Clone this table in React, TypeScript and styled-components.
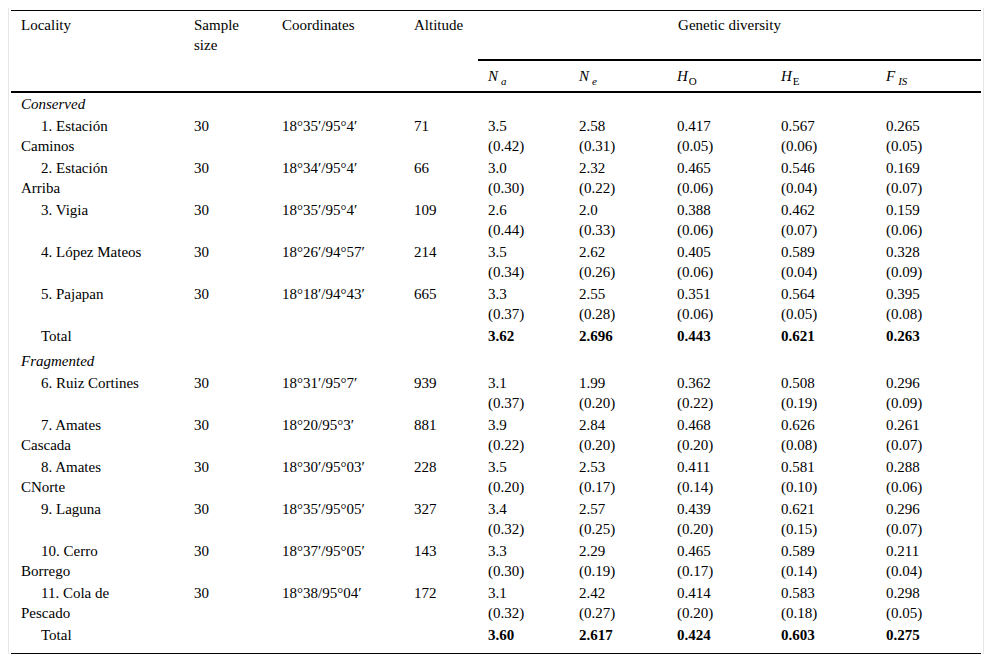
import React from "react";
import styled, { createGlobalStyle } from "styled-components";

const GlobalStyle = createGlobalStyle`
  body {
    margin: 8px;
    background: #ffffff;
    color: #000000;
    font-family: "Liberation Serif", "Times New Roman", serif;
  }
`;

const Frame = styled.div`
  border-left: 1px solid #e6e6e6;
  border-right: 1px solid #e6e6e6;
  padding: 2px 2px 0;
`;

const Table = styled.table`
  width: 100%;
  border-collapse: collapse;
  table-layout: fixed;
  font-family: "Liberation Serif", "Times New Roman", serif;
  font-size: 15px;
  line-height: 20px;
  color: #000;
  border-top: 1px solid #000;
  border-bottom: 1px solid #000;
`;

const HeadRow = styled.tr<{ $h: number }>`
  height: ${(p) => p.$h}px;
`;

const HeadCell = styled.th<{ $center?: boolean; $rule?: boolean; $tall?: boolean }>`
  text-align: ${(p) => (p.$center ? "center" : "left")};
  font-weight: normal;
  vertical-align: top;
  padding: ${(p) => (p.$tall ? "5px 10px" : "4px 10px")};
  border-bottom: ${(p) => (p.$rule ? "2px solid #000" : "none")};
`;

const Sym = styled.span`
  font-style: italic;
`;

const Sub = styled.sub<{ $italic?: boolean }>`
  font-size: 11px;
  line-height: 0;
  vertical-align: -4px;
  margin-left: ${(p) => (p.$italic ? "3px" : "1px")};
  font-style: ${(p) => (p.$italic ? "italic" : "normal")};
`;

const Cell = styled.td<{ $bold?: boolean; $bottom?: number }>`
  vertical-align: top;
  padding: 1px 10px ${(p) => p.$bottom ?? 1}px;
  font-weight: ${(p) => (p.$bold ? "bold" : "normal")};
`;

const Section = styled.span`
  font-style: italic;
`;

const Name = styled.div`
  text-indent: 20px;
`;

type Row = {
  name: string[];
  coord: string;
  alt: string;
  vals: [string, string][];
};

const conserved: Row[] = [
  { name: ["1. Estación", "Caminos"], coord: "18°35′/95°4′", alt: "71", vals: [["3.5", "(0.42)"], ["2.58", "(0.31)"], ["0.417", "(0.05)"], ["0.567", "(0.06)"], ["0.265", "(0.05)"]] },
  { name: ["2. Estación", "Arriba"], coord: "18°34′/95°4′", alt: "66", vals: [["3.0", "(0.30)"], ["2.32", "(0.22)"], ["0.465", "(0.06)"], ["0.546", "(0.04)"], ["0.169", "(0.07)"]] },
  { name: ["3. Vigia"], coord: "18°35′/95°4′", alt: "109", vals: [["2.6", "(0.44)"], ["2.0", "(0.33)"], ["0.388", "(0.06)"], ["0.462", "(0.07)"], ["0.159", "(0.06)"]] },
  { name: ["4. López Mateos"], coord: "18°26′/94°57′", alt: "214", vals: [["3.5", "(0.34)"], ["2.62", "(0.26)"], ["0.405", "(0.06)"], ["0.589", "(0.04)"], ["0.328", "(0.09)"]] },
  { name: ["5. Pajapan"], coord: "18°18′/94°43′", alt: "665", vals: [["3.3", "(0.37)"], ["2.55", "(0.28)"], ["0.351", "(0.06)"], ["0.564", "(0.05)"], ["0.395", "(0.08)"]] },
];

const fragmented: Row[] = [
  { name: ["6. Ruiz Cortines"], coord: "18°31′/95°7′", alt: "939", vals: [["3.1", "(0.37)"], ["1.99", "(0.20)"], ["0.362", "(0.22)"], ["0.508", "(0.19)"], ["0.296", "(0.09)"]] },
  { name: ["7. Amates", "Cascada"], coord: "18°20/95°3′", alt: "881", vals: [["3.9", "(0.22)"], ["2.84", "(0.20)"], ["0.468", "(0.20)"], ["0.626", "(0.08)"], ["0.261", "(0.07)"]] },
  { name: ["8. Amates", "CNorte"], coord: "18°30′/95°03′", alt: "228", vals: [["3.5", "(0.20)"], ["2.53", "(0.17)"], ["0.411", "(0.14)"], ["0.581", "(0.10)"], ["0.288", "(0.06)"]] },
  { name: ["9. Laguna"], coord: "18°35′/95°05′", alt: "327", vals: [["3.4", "(0.32)"], ["2.57", "(0.25)"], ["0.439", "(0.20)"], ["0.621", "(0.15)"], ["0.296", "(0.07)"]] },
  { name: ["10. Cerro", "Borrego"], coord: "18°37′/95°05′", alt: "143", vals: [["3.3", "(0.30)"], ["2.29", "(0.19)"], ["0.465", "(0.17)"], ["0.589", "(0.14)"], ["0.211", "(0.04)"]] },
  { name: ["11. Cola de", "Pescado"], coord: "18°38/95°04′", alt: "172", vals: [["3.1", "(0.32)"], ["2.42", "(0.27)"], ["0.414", "(0.20)"], ["0.583", "(0.18)"], ["0.298", "(0.05)"]] },
];

const widths = [173, 88, 132, 74, 91, 98, 104, 105, 105];

function DataRow({ row }: { row: Row }) {
  return (
    <tr>
      <Cell>
        <Name>
          {row.name[0]}
          {row.name[1] && (
            <>
              <br />
              {row.name[1]}
            </>
          )}
        </Name>
      </Cell>
      <Cell>30</Cell>
      <Cell>{row.coord}</Cell>
      <Cell>{row.alt}</Cell>
      {row.vals.map(([v, sd], i) => (
        <Cell key={i}>
          {v}
          <br />
          {sd}
        </Cell>
      ))}
    </tr>
  );
}

function TotalRow({ vals, last }: { vals: string[]; last?: boolean }) {
  const bottom = last ? 8 : 4;
  return (
    <tr>
      <Cell $bottom={bottom}>
        <Name>Total</Name>
      </Cell>
      <Cell $bottom={bottom} />
      <Cell $bottom={bottom} />
      <Cell $bottom={bottom} />
      {vals.map((v, i) => (
        <Cell key={i} $bold $bottom={bottom}>
          {v}
        </Cell>
      ))}
    </tr>
  );
}

function SectionRow({ label }: { label: string }) {
  return (
    <tr>
      <Cell colSpan={9}>
        <Section>{label}</Section>
      </Cell>
    </tr>
  );
}

export default function App() {
  return (
    <>
      <GlobalStyle />
      <Frame>
        <Table>
          <colgroup>
            {widths.map((w, i) => (
              <col key={i} style={{ width: w }} />
            ))}
          </colgroup>
          <thead>
            <HeadRow $h={49}>
              <HeadCell rowSpan={2} $rule>Locality</HeadCell>
              <HeadCell rowSpan={2} $rule>Sample size</HeadCell>
              <HeadCell rowSpan={2} $rule>Coordinates</HeadCell>
              <HeadCell rowSpan={2} $rule>Altitude</HeadCell>
              <HeadCell colSpan={5} $center $rule>Genetic diversity</HeadCell>
            </HeadRow>
            <HeadRow $h={32}>
              <HeadCell $rule $tall>
                <Sym>N</Sym>
                <Sub $italic>a</Sub>
              </HeadCell>
              <HeadCell $rule $tall>
                <Sym>N</Sym>
                <Sub $italic>e</Sub>
              </HeadCell>
              <HeadCell $rule $tall>
                <Sym>H</Sym>
                <Sub>O</Sub>
              </HeadCell>
              <HeadCell $rule $tall>
                <Sym>H</Sym>
                <Sub>E</Sub>
              </HeadCell>
              <HeadCell $rule $tall>
                <Sym>F</Sym>
                <Sub $italic>IS</Sub>
              </HeadCell>
            </HeadRow>
          </thead>
          <tbody>
            <SectionRow label="Conserved" />
            {conserved.map((r) => (
              <DataRow key={r.name[0]} row={r} />
            ))}
            <TotalRow vals={["3.62", "2.696", "0.443", "0.621", "0.263"]} />
            <SectionRow label="Fragmented" />
            {fragmented.map((r) => (
              <DataRow key={r.name[0]} row={r} />
            ))}
            <TotalRow vals={["3.60", "2.617", "0.424", "0.603", "0.275"]} last />
          </tbody>
        </Table>
      </Frame>
    </>
  );
}
